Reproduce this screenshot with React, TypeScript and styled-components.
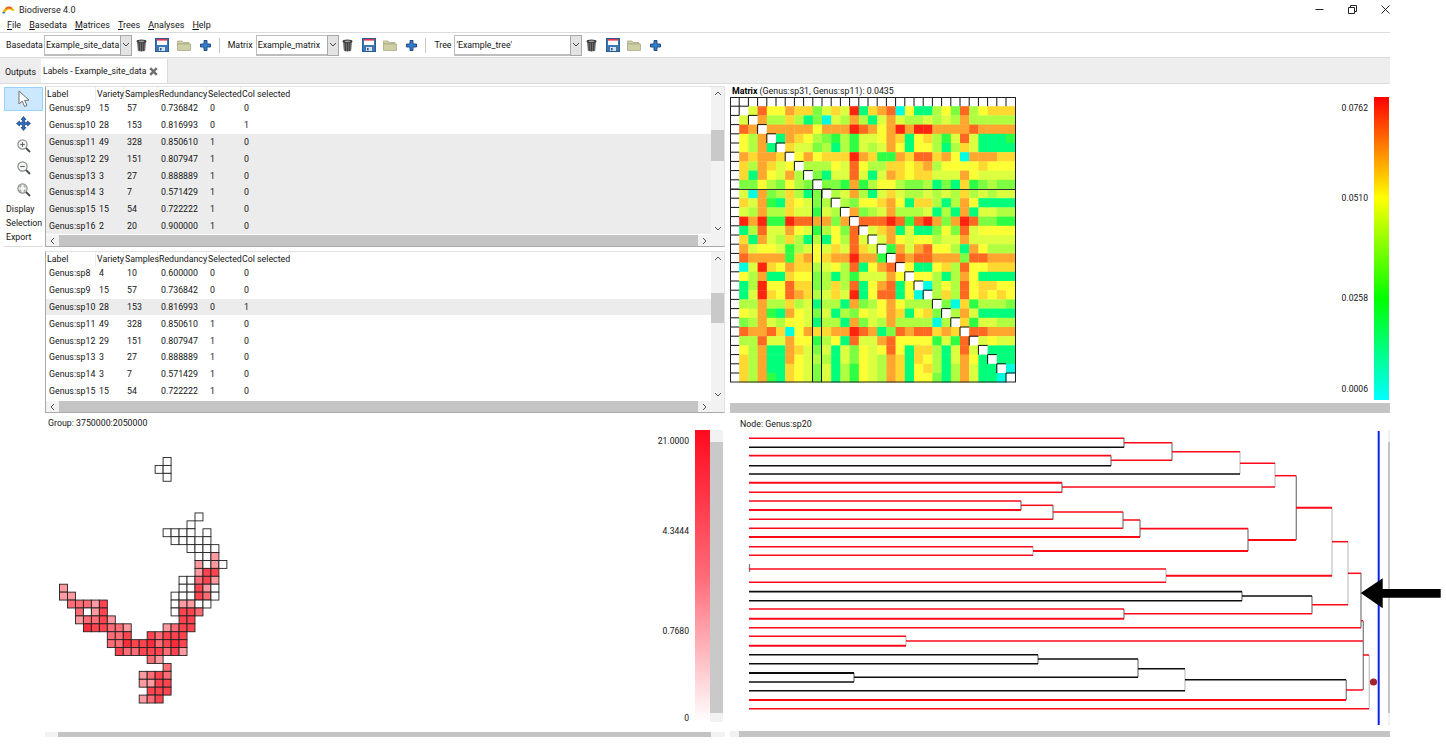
import React from 'react';
import styled, { createGlobalStyle } from 'styled-components';

const Global = createGlobalStyle`
  html, body { margin: 0; padding: 0; background: #fff; overflow: hidden; }
  body { font-family: Roboto, "Noto Sans", sans-serif; font-size: 8.8px; color: #141414; }
`;

const Page = styled.div`position: relative; width: 1446px; height: 746px; background: #fff; overflow: hidden;`;
const Win = styled.div`width: 1390px; height: 737px; overflow: hidden; display: flex; flex-direction: column;`;

const TitleBar = styled.div`height: 18px; display: flex; align-items: center; padding: 0 0 0 2px; font-size: 9px; color: #222;`;
const TitleText = styled.span`margin-left: 4px; flex: 1; position: relative; top: 0.5px;`;
const WinButton = styled.div<{ $w: number; $end?: boolean }>`
  width: ${p => p.$w}px; height: 16px; display: flex; align-items: center; color: #222;
  justify-content: ${p => (p.$end ? 'flex-end' : 'center')};
`;

const MenuBar = styled.div`height: 14px; border-bottom: 1px solid #dcdcdc; display: flex; align-items: center; padding-left: 7px; gap: 8px; font-size: 9px;`;
const MenuItem = styled.span`
  display: inline-block;
  &::first-letter { text-decoration: underline; }
`;

const Toolbar = styled.div`height: 24px; border-bottom: 1px solid #dcdcdc; display: flex; align-items: center; padding-left: 6px; font-size: 8.8px;`;
const ToolLabel = styled.span<{ $w: number }>`width: ${p => p.$w}px; flex: none;`;
const Combo = styled.div<{ $w: number }>`
  width: ${p => p.$w}px; height: 21px; flex: none; box-sizing: border-box; display: flex;
  border: 1px solid #bdbdbd; border-right: none; border-bottom-width: 2px; background: #fff;
`;
const ComboText = styled.span`flex: 1; padding-left: 1px; line-height: 18px; white-space: nowrap; overflow: hidden;`;
const ComboArrow = styled.div`
  width: 12px; margin-top: -1px; margin-bottom: -2px; background: #e3e3e3; border: 1px solid #a8a8a8; box-sizing: border-box;
  display: flex; align-items: center; justify-content: center; color: #444;
`;
const IconGroup = styled.div`display: flex; margin-left: -1.5px; margin-right: 1.5px; flex: none;`;
const IconBtn = styled.div`width: 21.3px; height: 22px; flex: none; display: flex; align-items: center; justify-content: center;`;
const Sep = styled.div`width: 1px; height: 15px; background: #c8c8c8; margin: 0 8px 0 1.5px; flex: none;`;

const TabBar = styled.div`height: 25px; border-bottom: 1px solid #dcdcdc; background: #eeeeee; display: flex; align-items: stretch;`;
const PlainTab = styled.div`width: 41px; padding-left: 5px; box-sizing: border-box; line-height: 29px; font-size: 8.8px;`;
const ActiveTab = styled.div`
  width: 127px; box-sizing: border-box; background: #fff; padding-left: 2px; display: flex; align-items: center; gap: 3px;
  border-right: 1px solid #dadada; font-size: 8.6px; margin-top: 1px;
`;

const Main = styled.div`flex: 1; display: grid; grid-template-columns: 45px 680px 665px; min-height: 0;`;

const ToolCol = styled.div`padding: 3px 2px 0 4px; display: flex; flex-direction: column; align-items: stretch;`;
const ToolBtn = styled.div<{ $active?: boolean; $h: number }>`
  height: ${p => p.$h}px; display: flex; align-items: center; justify-content: center; box-sizing: border-box;
  background: ${p => (p.$active ? '#cce8ff' : 'transparent')};
  border: 1px solid ${p => (p.$active ? '#99d1ff' : 'transparent')};
`;
const ToolText = styled.div`padding-left: 2px; height: 14px; line-height: 14px; font-size: 8.8px;`;
const ToolTexts = styled.div`margin-top: 1px; padding-bottom: 2px; border-bottom: 1px solid #dcdcdc;`;

const LeftCol = styled.div`display: flex; flex-direction: column; min-width: 0;`;
const RightCol = styled.div`display: flex; flex-direction: column; min-width: 0;`;

const ListPane = styled.div<{ $mt: number; $h: number }>`
  margin-top: ${p => p.$mt}px; height: ${p => p.$h}px; flex: none; box-sizing: border-box;
  border: 1px solid #a9a9a9; border-top-color: #e2e2e2; border-right-color: #e2e2e2;
  display: grid; grid-template-columns: 1fr 13px; grid-template-rows: 1fr 11px; overflow: hidden;
`;
const ListBody = styled.div`min-width: 0; overflow: hidden;`;
const Row = styled.div<{ $sel?: boolean }>`
  display: grid; grid-template-columns: 50px 28px 34px 49px 34px 1fr; height: 16.8px; align-items: center;
  background: ${p => (p.$sel ? '#ececec' : 'transparent')};
`;
const HeadRow = styled.div`display: grid; grid-template-columns: 50px 28px 34px 49px 34px 1fr; height: 13px; align-items: center;`;
const HeadCell = styled.div`padding-left: 1px; white-space: nowrap; border-right: 1px solid #ececec; height: 100%; line-height: 14px; &:last-child { border-right: none; }`;
const Cell = styled.div`padding-left: 3px; white-space: nowrap;`;

const VScroll = styled.div`background: #f2f2f2; display: flex; flex-direction: column; align-items: stretch; min-height: 0;`;
const MapVScroll = styled(VScroll)`width: 13px; flex: none; height: 292px;`;
const ScrollArrow = styled.div<{ $w?: number; $h?: number }>`
  width: ${p => (p.$w ? `${p.$w}px` : 'auto')}; height: ${p => (p.$h ? `${p.$h}px` : 'auto')}; flex: none;
  display: flex; align-items: center; justify-content: center; color: #555;
`;
const VThumb = styled.div<{ $top: number; $h: number }>`margin-top: ${p => p.$top}px; height: ${p => p.$h}px; background: #c9c9c9; flex: none;`;
const Grow = styled.div`flex: 1;`;
const HScroll = styled.div<{ $h: number }>`height: ${p => p.$h}px; background: #f2f2f2; display: flex; align-items: stretch; flex: none;`;
const HThumb = styled.div`flex: 1; background: #c4c4c4;`;

const MapPane = styled.div`flex: 1; display: flex; flex-direction: column; min-height: 0;`;
const PaneLabel = styled.div<{ $pl: number; $h: number }>`height: ${p => p.$h}px; padding-left: ${p => p.$pl}px; line-height: ${p => p.$h + 4}px; flex: none;`;
const MapBody = styled.div`display: flex; height: 302px; flex: none; align-items: flex-start;`;
const MapCanvas = styled.div`width: 604px; flex: none; height: 292px;`;
const LegendLabels = styled.div<{ $rows: string; $pt: number; $w: number }>`
  width: ${p => p.$w}px; flex: none; box-sizing: border-box; display: grid; grid-template-rows: ${p => p.$rows};
  padding-top: ${p => p.$pt}px; text-align: right; line-height: 11px; font-size: 8.6px;
`;
const Bar = styled.div<{ $w: number; $h: number; $bg: string }>`width: ${p => p.$w}px; height: ${p => p.$h}px; flex: none; background: ${p => p.$bg};`;
const MapLegendGap = styled.div`width: 6px; flex: none;`;

const MatrixPane = styled.div`height: 331px; flex: none; display: flex; flex-direction: column; padding-top: 1px; box-sizing: border-box;`;
const MatrixTitle = styled.div`height: 12px; line-height: 13px; padding-left: 7px; flex: none; b { font-weight: 700; color: #000; }`;
const MatrixArea = styled.div`display: flex; flex: none; height: 306px; padding-left: 5px;`;
const MatrixBox = styled.div`width: 287px; flex: none;`;
const Spacer = styled.div`flex: 1;`;
const MatrixLegend = styled.div`display: flex; gap: 6px; padding-right: 1px;`;
const MatrixScroll = styled.div`margin-left: 5px; height: 10px; background: #c4c4c4; flex: none;`;

const TreePane = styled.div`flex: 1; display: flex; flex-direction: column; min-height: 0;`;
const TreeBody = styled.div`height: 300.7px; flex: none; display: flex;`;
const TreeCanvas = styled.div`width: 653px; margin-left: 10px; flex: none; height: 295px;`;
const TreeV = styled.div`width: 2px; flex: none; display: flex; flex-direction: column; background: #f0f0f0; height: 295px;`;
const TreeVThumb = styled.div`margin-top: 12px; height: 271px; background: #c4c4c4;`;
const TreeH = styled.div`margin-left: 5px; display: flex; height: 7px; flex: none; background: #f2f2f2;`;

const ArrowOverlay = styled.svg`position: absolute; left: 1358px; top: 576px;`;

/* ---------- icons ---------- */
const Logo = () => (
  <svg width="13" height="9" viewBox="0 0 13 9">
    <path d="M0.5 7 C2 2 10 0 12.5 6 L10 6 C8.5 4 5 4 3.5 7 Z" fill="#f4b400" />
    <path d="M3 3.5 C5 1 8.5 1 10.5 3 L9 4 C7.5 3 5.5 3 4.5 4.5 Z" fill="#e5641c" />
    <path d="M0.5 7 L3.5 7 L2.5 8.5 L0.5 8.5 Z" fill="#3b78c4" />
  </svg>
);
const Trash = () => (
  <svg width="11" height="13" viewBox="0 0 11 13">
    <path d="M1 2.5 L10 2.5 L9.2 11.6 C8 12.8 3 12.8 1.8 11.6 Z" fill="#6e6e6e" />
    <path d="M3.2 4 L3.5 11.8 M5.5 4 L5.5 12.2 M7.8 4 L7.5 11.8" stroke="#3e3e3e" strokeWidth="1" />
    <ellipse cx="5.5" cy="2.3" rx="5" ry="1.9" fill="#3c3c3c" />
    <ellipse cx="5.5" cy="2.3" rx="3" ry="0.9" fill="#9a9a9a" />
  </svg>
);
const Save = () => (
  <svg width="14" height="14" viewBox="0 0 14 14">
    <rect x="0.5" y="0.5" width="13" height="13" fill="#3d78b4" stroke="#2a5a92" />
    <rect x="2" y="1" width="10" height="6" fill="#fff" />
    <rect x="2" y="1" width="10" height="1.6" fill="#e8344a" />
    <rect x="4" y="9" width="6" height="4" fill="#d9e2ec" />
    <rect x="5" y="10" width="1.6" height="2.4" fill="#2a5a92" />
  </svg>
);
const Folder = () => (
  <svg width="14" height="13" viewBox="0 0 14 13">
    <path d="M0.5 2 L5 2 L6 3.5 L12 3.5 L12 5 L0.5 5 Z" fill="#d0d0a8" stroke="#a9a985" strokeWidth="0.8" />
    <path d="M0.5 5 L13.5 5 L13.5 11.5 L0.5 11.5 Z" fill="#cfcfa6" stroke="#a9a985" strokeWidth="0.8" />
  </svg>
);
const Plus = () => (
  <svg width="11" height="11" viewBox="0 0 11 11">
    <path d="M4 0.5 H7 V4 H10.5 V7 H7 V10.5 H4 V7 H0.5 V4 H4 Z" fill="#2f7fd0" stroke="#1d3f72" strokeWidth="0.9" />
  </svg>
);
const IconSet = () => (
  <IconGroup>
    <IconBtn><Trash /></IconBtn>
    <IconBtn><Save /></IconBtn>
    <IconBtn><Folder /></IconBtn>
    <IconBtn><Plus /></IconBtn>
  </IconGroup>
);
const Chevron = ({ dir }: { dir: 'up' | 'down' | 'left' | 'right' }) => {
  const d = { up: 'M1 5 L4 2 L7 5', down: 'M1 2 L4 5 L7 2', left: 'M5 1 L2 4 L5 7', right: 'M2 1 L5 4 L2 7' }[dir];
  return (
    <svg width="8" height="8" viewBox="0 0 8 8">
      <path d={d} fill="none" stroke="currentColor" strokeWidth="1" />
    </svg>
  );
};
const CursorIcon = () => (
  <svg width="14" height="18" viewBox="0 0 14 18">
    <path d="M2 1 L2 14 L5.2 11.2 L7.6 16.5 L10 15.4 L7.6 10.4 L12 10.2 Z" fill="#fff" stroke="#6e6e6e" strokeWidth="1" />
  </svg>
);
const MoveIcon = () => (
  <svg width="15" height="15" viewBox="0 0 15 15">
    <path d="M7.5 0.5 L10 3.5 H8.6 V6.4 H11.5 V5 L14.5 7.5 L11.5 10 V8.6 H8.6 V11.5 H10 L7.5 14.5 L5 11.5 H6.4 V8.6 H3.5 V10 L0.5 7.5 L3.5 5 V6.4 H6.4 V3.5 H5 Z" fill="#2a6fc0" stroke="#173f78" strokeWidth="0.7" />
  </svg>
);
const Magnifier = ({ mark }: { mark: 'plus' | 'minus' | 'fit' }) => (
  <svg width="14" height="14" viewBox="0 0 14 14">
    <circle cx="5.5" cy="5.5" r="4.6" fill="#f4f6f4" stroke="#8a8f8a" strokeWidth="1.2" />
    <path d="M9 9 L13 13" stroke="#4a4a4a" strokeWidth="1.8" />
    {mark !== 'fit' && <path d="M3.2 5.5 H7.8" stroke="#5a6a5a" strokeWidth="1.1" />}
    {mark === 'plus' && <path d="M5.5 3.2 V7.8" stroke="#5a6a5a" strokeWidth="1.1" />}
    {mark === 'fit' && <path d="M3 4.5 V3 H4.5 M6.5 3 H8 V4.5 M8 6.5 V8 H6.5 M4.5 8 H3 V6.5" fill="none" stroke="#6a7a6a" strokeWidth="0.8" />}
  </svg>
);

/* ---------- data ---------- */
type L = [string, number, number, string, number, number];
const S: Record<string, L> = {
  sp8: ['Genus:sp8', 4, 10, '0.600000', 0, 0],
  sp9: ['Genus:sp9', 15, 57, '0.736842', 0, 0],
  sp10: ['Genus:sp10', 28, 153, '0.816993', 0, 1],
  sp11: ['Genus:sp11', 49, 328, '0.850610', 1, 0],
  sp12: ['Genus:sp12', 29, 151, '0.807947', 1, 0],
  sp13: ['Genus:sp13', 3, 27, '0.888889', 1, 0],
  sp14: ['Genus:sp14', 3, 7, '0.571429', 1, 0],
  sp15: ['Genus:sp15', 15, 54, '0.722222', 1, 0],
  sp16: ['Genus:sp16', 2, 20, '0.900000', 1, 0],
};
const HEADS = ['Label', 'Variety', 'Samples', 'Redundancy', 'Selected', 'Col selected'];

const List = ({ keys, sel, mt, h, thumbTop, thumbH }: { keys: string[]; sel: string[]; mt: number; h: number; thumbTop: number; thumbH: number }) => (
  <ListPane $mt={mt} $h={h}>
    <ListBody>
      <HeadRow>{HEADS.map(t => <HeadCell key={t}>{t}</HeadCell>)}</HeadRow>
      {keys.map(k => (
        <Row key={k} $sel={sel.includes(k)}>
          {S[k].map((v, i) => <Cell key={i}>{v}</Cell>)}
        </Row>
      ))}
    </ListBody>
    <VScroll>
      <ScrollArrow $h={13}><Chevron dir="up" /></ScrollArrow>
      <VThumb $top={thumbTop} $h={thumbH} />
      <Grow />
      <ScrollArrow $h={13}><Chevron dir="down" /></ScrollArrow>
    </VScroll>
    <HScroll $h={11}>
      <ScrollArrow $w={13}><Chevron dir="left" /></ScrollArrow>
      <HThumb />
      <ScrollArrow $w={13}><Chevron dir="right" /></ScrollArrow>
    </HScroll>
    <VScroll />
  </ListPane>
);

/* ---------- matrix ---------- */
const TAILS = [
  '59668773575a17890611463946777', '8447413054841585445454844444', '888886888a9868a8aa888898888',
  '18764324255687167425951112', '7553414254586166414751111', '686777a87228799786088877',
  '44465964477678466667666', '3155951587677555865555', '332824664334131723433',
  '45841575445454745455', '4366786177414861111', '834584445141815544', '999a929a838a93322',
  '5781511363956666', '586566455855555', '28589664186444', '9899888399888', '611674966777',
  '66414861111', '0464967766', '474967676', '30724443', '4851111', '725544', '99888', '5655', '111', '11', '0', '',
];
const SHADES: Record<string, string> = {
  '0': '#00ffe0', '1': '#00ff7a', '2': '#2cff44', '3': '#7cff40', '4': '#b0ff40', '5': '#dcff40',
  '6': '#fcff34', '7': '#ffd830', '8': '#ffa62e', '9': '#ff6820', a: '#ff2410',
};
const STEP = 9.2;
const MatrixChart = () => {
  const cells: React.ReactNode[] = [];
  TAILS.forEach((tail, i) => {
    tail.split('').forEach((ch, k) => {
      const j = i + 1 + k;
      const fill = SHADES[ch];
      cells.push(<rect key={`a${i}-${j}`} x={(j + 1) * STEP} y={(i + 1) * STEP} width={STEP + 0.3} height={STEP + 0.3} fill={fill} />);
      cells.push(<rect key={`b${i}-${j}`} x={(i + 1) * STEP} y={(j + 1) * STEP} width={STEP + 0.3} height={STEP + 0.3} fill={fill} />);
    });
  });
  const ticks = Array.from({ length: 31 }, (_, i) => i);
  return (
    <svg width="287" height="286" viewBox="0 0 287 286">
      {cells}
      {ticks.slice(1).map(i => (
        <path key={`d${i}`} d={`M${i * STEP} ${i * STEP + STEP} V${i * STEP} H${i * STEP + STEP}`} fill="none" stroke="#111" strokeWidth="1" />
      ))}
      {ticks.slice(1).map(i => (
        <g key={`h${i}`} stroke="#111" strokeWidth="1">
          <line x1={i * STEP} y1={0} x2={i * STEP} y2={STEP} />
          <line x1={0} y1={i * STEP} x2={STEP} y2={i * STEP} />
        </g>
      ))}
      <line x1="0" y1="92.5" x2="285.5" y2="92.5" stroke="#333" strokeWidth="1" />
      <line x1="82.5" y1="92.5" x2="82.5" y2="285" stroke="#111" strokeWidth="1" />
      <line x1="91.5" y1="92.5" x2="91.5" y2="285" stroke="#111" strokeWidth="1" />
      <rect x="0.5" y="0.5" width="285" height="284.5" fill="none" stroke="#222" strokeWidth="1" />
    </svg>
  );
};

/* ---------- map ---------- */
const MAP: [number, number, string][] = [
  [0, 13, 'W'], [1, 12, 'WW'], [2, 13, 'W'],
  [7, 17, 'W'], [8, 16, 'W'], [9, 13, 'WWWW.W'], [10, 14, 'WWWWW'], [11, 16, 'WWWW'], [12, 17, 'WWL'], [13, 17, 'LWLW'],
  [14, 17, 'LSS'], [15, 15, 'WWMSL'], [16, 0, 'L'], [16, 15, 'WWSLW'], [17, 0, 'LL'], [17, 14, 'WWWSMW'],
  [18, 1, 'MMMLS'], [18, 14, 'WLLWW'], [19, 2, 'MWLS'], [19, 14, 'WSSM'], [20, 2, 'LMMSL'], [20, 15, 'SS'],
  [21, 3, 'VSSMML'], [21, 13, 'LMSS'], [22, 6, 'MMS'], [22, 11, 'SMSSS'], [23, 6, 'MMVSSVMSVS'], [24, 7, 'SMMSSSMSL'],
  [25, 11, 'ML'], [26, 13, 'M'], [27, 10, 'LMSM'], [28, 10, 'LLSS'], [29, 11, 'SSS'], [30, 10, 'LMS'],
];
const MAP_FILL: Record<string, string> = { W: '#ffffff', L: '#ff9aa0', M: '#ff6c75', S: '#ff4450', V: '#ff2a3a' };
const MapChart = () => (
  <svg width="604" height="292" viewBox="45 430 604 292">
    {MAP.flatMap(([r, c0, s]) =>
      s.split('').map((ch, i) =>
        ch === '.' ? null : (
          <rect key={`${r}-${c0 + i}`} x={59.5 + 7.97 * (c0 + i)} y={457.5 + 7.92 * r} width={7.97} height={7.92} fill={MAP_FILL[ch]} stroke="#222" strokeWidth="0.9" />
        ),
      ),
    )}
  </svg>
);

/* ---------- tree ---------- */
const R = '#fa0a18';
const K = '#0c0c0c';
const G = '#808080';
const P = '#c6c6c6';
const HS: [number, number, number, string, number?][] = [
  [438.3, 749, 1124, R], [447.3, 749, 1124, K], [442.7, 1124, 1172, R], [455.7, 749, 1111, R, 1.8], [465.7, 749, 1111, K],
  [460.3, 1111, 1172, R], [451.7, 1172, 1240, R], [474, 749, 1240, K], [463.3, 1240, 1275, R], [482.7, 749, 1062, R, 2],
  [492.3, 749, 1062, R], [487, 1062, 1275, R], [475.7, 1275, 1296, R], [501, 749, 1021, R], [510, 749, 1021, R, 1.8],
  [505.3, 1021, 1053, R], [519.3, 749, 1053, R], [512, 1053, 1123, R], [528.3, 749, 1123, R], [520, 1123, 1140, R],
  [537, 749, 1140, R, 2], [528.7, 1140, 1248, R, 1.8], [546.7, 749, 1033, R], [555.3, 749, 1033, R], [551, 1033, 1248, R, 2.2],
  [540, 1248, 1296, R, 2], [507.7, 1296, 1332, R, 2], [569, 749, 1166, R], [582.3, 749, 1166, R], [575.7, 1166, 1332, R, 2],
  [541.7, 1332, 1348, R], [591.7, 749, 1242, K, 1.8], [600.7, 749, 1242, K], [596, 1242, 1312, K], [609, 749, 1124, R],
  [618.7, 749, 1124, R, 2], [613.7, 1124, 1312, R], [604.7, 1312, 1348, R], [573.3, 1348, 1361, R], [627.7, 749, 1361, R],
  [620.7, 1361, 1363, R], [636.3, 749, 906, R], [645.7, 749, 906, R, 2], [641, 906, 1363, R], [655, 1363, 1369, R],
  [654.7, 749, 1038, K], [663.7, 749, 1038, K], [659, 1038, 1138, K], [673, 749, 854, K, 1.8], [682, 749, 854, K],
  [677.3, 854, 1138, K], [668.7, 1138, 1185, K], [690.7, 749, 1185, K], [679.7, 1185, 1346, K], [700, 749, 1346, R, 2.2],
  [690, 1346, 1363, R], [708.7, 749, 1369, R],
];
const VS: [number, number, number, string][] = [
  [1124, 438, 447.5, G], [1172, 442.5, 460.5, G], [1111, 455.5, 466, G], [1240, 451.5, 474, P], [1275, 463, 487, P], [1296.3, 475.5, 540, G],
  [1062, 482.5, 492.5, G], [1021, 501, 510, G], [1053, 505, 519.5, G], [1123, 512, 528.5, G], [1140, 520, 537, G], [1248, 528.5, 551, G],
  [1033, 546.5, 555.5, P], [1332, 507.5, 575.7, P], [1166, 569, 582.5, P], [749.5, 564, 572, G], [1348, 541.5, 604.7, P], [1242, 591.5, 600.7, G],
  [1312, 596, 613.7, G], [1124, 609, 618.7, G], [1361, 573, 627.7, G], [1363.3, 620.7, 690, G], [906, 636.3, 645.7, P], [1369.3, 655, 708.7, P],
  [1038, 654.7, 663.7, G], [854, 673, 682, G], [1138, 659, 677.3, G], [1185, 668.7, 690.7, P], [1346.3, 679.7, 700, G],
];
const TreeChart = () => (
  <svg width="653" height="295" viewBox="735 430 653 295">
    {VS.map(([x, y1, y2, c], i) => <line key={`v${i}`} x1={x} x2={x} y1={y1} y2={y2} stroke={c} strokeWidth="1.3" />)}
    {HS.map(([y, x1, x2, c, w], i) => <line key={`h${i}`} x1={x1} x2={x2} y1={y} y2={y} stroke={c} strokeWidth={w ?? 1.5} />)}
    <line x1="1378.7" x2="1378.7" y1="431" y2="725" stroke="#0a22ee" strokeWidth="2" />
    <circle cx="1373.5" cy="682" r="3.6" fill="#a0222c" />
  </svg>
);

const App = () => (
  <Page>
    <Global />
    <Win>
      <TitleBar>
        <Logo />
        <TitleText>Biodiverse 4.0</TitleText>
        <WinButton $w={33}>
          <svg width="9" height="9" viewBox="0 0 9 9"><path d="M0.5 4.5 H8.5" stroke="currentColor" /></svg>
        </WinButton>
        <WinButton $w={33}>
          <svg width="9" height="9" viewBox="0 0 9 9"><path d="M2.5 2.5 V0.5 H8.5 V6.5 H6.5 M0.5 2.5 H6.5 V8.5 H0.5 Z" fill="none" stroke="currentColor" /></svg>
        </WinButton>
        <WinButton $w={21} $end>
          <svg width="9" height="9" viewBox="0 0 9 9"><path d="M0.5 0.5 L8.5 8.5 M8.5 0.5 L0.5 8.5" stroke="currentColor" /></svg>
        </WinButton>
      </TitleBar>
      <MenuBar>
        {['File', 'Basedata', 'Matrices', 'Trees', 'Analyses', 'Help'].map(m => <MenuItem key={m}>{m}</MenuItem>)}
      </MenuBar>
      <Toolbar>
        <ToolLabel $w={38}>Basedata</ToolLabel>
        <Combo $w={88}><ComboText>Example_site_data</ComboText><ComboArrow><Chevron dir="down" /></ComboArrow></Combo>
        <IconSet />
        <Sep />
        <ToolLabel $w={28}>Matrix</ToolLabel>
        <Combo $w={83}><ComboText>Example_matrix</ComboText><ComboArrow><Chevron dir="down" /></ComboArrow></Combo>
        <IconSet />
        <Sep />
        <ToolLabel $w={20}>Tree</ToolLabel>
        <Combo $w={128}><ComboText>'Example_tree'</ComboText><ComboArrow><Chevron dir="down" /></ComboArrow></Combo>
        <IconSet />
      </Toolbar>
      <TabBar>
        <PlainTab>Outputs</PlainTab>
        <ActiveTab>
          Labels - Example_site_data
          <svg width="9" height="9" viewBox="0 0 9 9"><path d="M1.2 1.2 L7.8 7.8 M7.8 1.2 L1.2 7.8" stroke="#6e6e6e" strokeWidth="2.4" /></svg>
        </ActiveTab>
      </TabBar>
      <Main>
        <ToolCol>
          <ToolBtn $active $h={24}><CursorIcon /></ToolBtn>
          <ToolBtn $h={24}><MoveIcon /></ToolBtn>
          <ToolBtn $h={22}><Magnifier mark="plus" /></ToolBtn>
          <ToolBtn $h={22}><Magnifier mark="minus" /></ToolBtn>
          <ToolBtn $h={22}><Magnifier mark="fit" /></ToolBtn>
          <ToolTexts>
            <ToolText>Display</ToolText>
            <ToolText>Selection</ToolText>
            <ToolText>Export</ToolText>
          </ToolTexts>
        </ToolCol>
        <LeftCol>
          <List keys={['sp9', 'sp10', 'sp11', 'sp12', 'sp13', 'sp14', 'sp15', 'sp16']} sel={['sp11', 'sp12', 'sp13', 'sp14', 'sp15', 'sp16']} mt={2} h={161} thumbTop={30} thumbH={31} />
          <List keys={['sp8', 'sp9', 'sp10', 'sp11', 'sp12', 'sp13', 'sp14', 'sp15']} sel={['sp10']} mt={4} h={162} thumbTop={28} thumbH={30} />
          <MapPane>
            <PaneLabel $pl={3} $h={17}>Group: 3750000:2050000</PaneLabel>
            <MapBody>
              <MapCanvas><MapChart /></MapCanvas>
              <LegendLabels $w={40} $pt={6} $rows="90px 100px 87px 11px">
                <span>21.0000</span><span>4.3444</span><span>0.7680</span><span>0</span>
              </LegendLabels>
              <MapLegendGap />
              <Bar $w={15} $h={292} $bg="linear-gradient(#ff0a1e, #ff6a78 50%, #ffffff)" />
              <MapVScroll><VThumb $top={12} $h={271} /></MapVScroll>
            </MapBody>
            <HScroll $h={5}>
              <ScrollArrow $w={13} />
              <HThumb />
              <ScrollArrow $w={14} />
            </HScroll>
          </MapPane>
        </LeftCol>
        <RightCol>
          <MatrixPane>
            <MatrixTitle><b>Matrix</b> (Genus:sp31, Genus:sp11): 0.0435</MatrixTitle>
            <MatrixArea>
              <MatrixBox><MatrixChart /></MatrixBox>
              <Spacer />
              <MatrixLegend>
                <LegendLabels $w={40} $pt={6} $rows="90px 100px 91px 11px">
                  <span>0.0762</span><span>0.0510</span><span>0.0258</span><span>0.0006</span>
                </LegendLabels>
                <Bar $w={15} $h={303} $bg="linear-gradient(#ff0000, #ffff00 33.3%, #00ff00 66.6%, #00ffff)" />
              </MatrixLegend>
            </MatrixArea>
            <MatrixScroll />
          </MatrixPane>
          <TreePane>
            <PaneLabel $pl={15} $h={15}>Node: Genus:sp20</PaneLabel>
            <TreeBody>
              <TreeCanvas><TreeChart /></TreeCanvas>
              <TreeV><TreeVThumb /></TreeV>
            </TreeBody>
            <TreeH>
              <ScrollArrow $w={9} />
              <HThumb />
            </TreeH>
          </TreePane>
        </RightCol>
      </Main>
    </Win>
    <ArrowOverlay width="84" height="34" viewBox="1358 576 84 34">
      <path d="M1360.7 593 L1382.7 578.3 V589 H1440.7 V597.7 H1382.7 V608.3 Z" fill="#000" />
    </ArrowOverlay>
  </Page>
);

export default App;
